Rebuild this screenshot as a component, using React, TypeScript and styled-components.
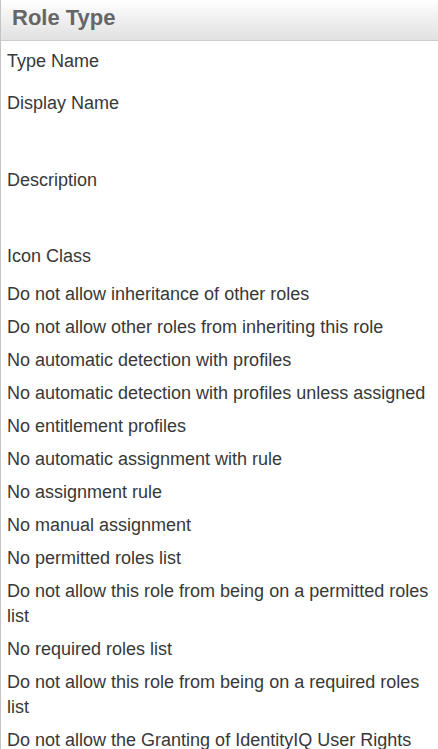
import React from "react";
import styled, { createGlobalStyle } from "styled-components";

const Global = createGlobalStyle`
  html, body { margin: 0; padding: 0; background: #ffffff; }
  body { font-family: "Liberation Sans", Arial, sans-serif; overflow: hidden; }
`;

const Panel = styled.section`
  width: 438px;
  height: 749px;
  box-sizing: border-box;
  border-left: 1px solid #c4c4c4;
  overflow: hidden;
`;

const Header = styled.header`
  height: 40px;
  box-sizing: content-box;
  border-bottom: 1px solid #cdcdcd;
  background: linear-gradient(to bottom, #ffffff 0%, #f2f2f2 40%, #e1e1e1 100%);
  display: flex;
  align-items: center;
  padding-left: 11px;
`;

const Title = styled.h2`
  margin: 0;
  font-family: "Liberation Sans", Arial, sans-serif;
  font-size: 22px;
  font-weight: bold;
  color: #666666;
  line-height: 26px;
  padding-bottom: 4px;
`;

const Body = styled.div`
  display: flex;
  flex-direction: column;
  padding: 8px 4px 0 6px;
`;

const Label = styled.div<{ $after: number }>`
  font-size: 18px;
  line-height: 25px;
  color: #383838;
  padding-bottom: ${(p) => p.$after}px;
`;

const fields: [string, number][] = [
  ["Type Name", 17],
  ["Display Name", 52],
  ["Description", 51],
  ["Icon Class", 13],
  ["Do not allow inheritance of other roles", 8],
  ["Do not allow other roles from inheriting this role", 8],
  ["No automatic detection with profiles", 8],
  ["No automatic detection with profiles unless assigned", 8],
  ["No entitlement profiles", 8],
  ["No automatic assignment with rule", 8],
  ["No assignment rule", 8],
  ["No manual assignment", 8],
  ["No permitted roles list", 8],
  ["Do not allow this role from being on a permitted roles list", 8],
  ["No required roles list", 8],
  ["Do not allow this role from being on a required roles list", 8],
  ["Do not allow the Granting of IdentityIQ User Rights", 8],
];

export default function App() {
  return (
    <>
      <Global />
      <Panel>
        <Header>
          <Title>Role Type</Title>
        </Header>
        <Body>
          {fields.map(([text, after]) => (
            <Label key={text} $after={after}>
              {text}
            </Label>
          ))}
        </Body>
      </Panel>
    </>
  );
}
